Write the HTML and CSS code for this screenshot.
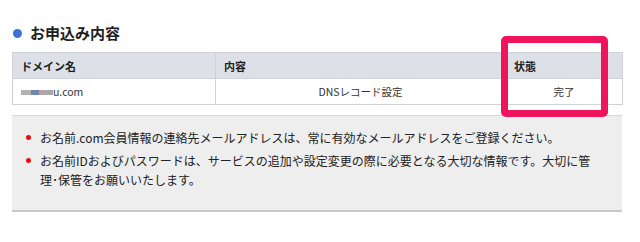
FILE: index.html
```html
<!DOCTYPE html>
<html lang="ja">
<head>
<meta charset="utf-8">
<link rel="stylesheet" href="styles.css">
</head>
<body>
<div class="page">
  <h2 class="heading"><span class="dot"></span>お申込み内容</h2>
  <table class="order">
    <colgroup><col class="c1"><col class="c2"><col class="c3"></colgroup>
    <thead>
      <tr><th>ドメイン名</th><th>内容</th><th>状態</th></tr>
    </thead>
    <tbody>
      <tr>
        <td class="domain"><span class="blur b1"></span><span class="blur b2"></span><span class="blur b3"></span><span class="blur b4"></span>u.com</td>
        <td class="center">DNSレコード設定</td>
        <td class="center">完了</td>
      </tr>
    </tbody>
  </table>
  <ul class="notes">
    <li>お名前.com会員情報の連絡先メールアドレスは、常に有効なメールアドレスをご登録ください。</li>
    <li>お名前IDおよびパスワードは、サービスの追加や設定変更の際に必要となる大切な情報です。大切に管理･保管をお願いいたします。</li>
  </ul>
  <div class="highlight"></div>
</div>
</body>
</html>
```
FILE: styles.css
```css
html, body {
  margin: 0;
  padding: 0;
  background: #ffffff;
}
body {
  font-family: "Noto Sans CJK JP", "Noto Sans", sans-serif;
  color: #222;
}
.page {
  position: relative;
  width: 610px;
  padding: 22px 0 0 12px;
}
.heading {
  display: flex;
  align-items: center;
  gap: 8px;
  margin: 0 0 8px 0;
  height: 22px;
  font-size: 15px;
  font-weight: bold;
  line-height: 22px;
  color: #1e1e1e;
}
.dot {
  width: 9px;
  height: 9px;
  border-radius: 50%;
  background: #3a72d6;
  margin-left: 1px;
}
.order {
  width: 610px;
  border-collapse: collapse;
  table-layout: fixed;
  font-size: 10.5px;
}
.c1 { width: 203px; }
.c2 { width: 290px; }
.c3 { width: 117px; }
.order th, .order td {
  border: 1px solid #cfd2d6;
  height: 26px;
  padding: 0 8px;
  box-sizing: border-box;
  text-align: left;
}
.order th {
  background: #dde1e7;
  font-weight: bold;
  font-size: 11px;
  color: #222;
}
.order td {
  background: #fff;
  color: #333;
}
.order td.center { text-align: center; }
.domain { white-space: nowrap; }
.blur {
  display: inline-block;
  height: 5px;
  vertical-align: 1px;
}
.b1 { width: 10px; background: #b4b2b2; }
.b2 { width: 8px; background: #6f87ab; }
.b3 { width: 7px; background: #b7a4ac; }
.b4 { width: 7px; background: #a9a9ad; }
.notes {
  list-style: none;
  margin: 10px 0 0 0;
  padding: 12px 16px 21px 28px;
  background: #eeeeee;
  border-top: 1px solid #d8d8d8;
  border-bottom: 2px solid #c9c9c9;
  font-size: 12px;
  line-height: 19px;
  color: #222;
}
.notes li {
  position: relative;
  margin-bottom: 4px;
}
.notes li:last-child { margin-bottom: 0; }
.notes li::before {
  content: "";
  position: absolute;
  left: -14px;
  top: 7px;
  width: 5px;
  height: 5px;
  border-radius: 50%;
  background: #e01010;
}
.highlight {
  position: absolute;
  left: 501px;
  top: 36px;
  width: 107px;
  height: 81px;
  box-sizing: border-box;
  border: 7px solid #f0145c;
  border-radius: 5px;
}
```
